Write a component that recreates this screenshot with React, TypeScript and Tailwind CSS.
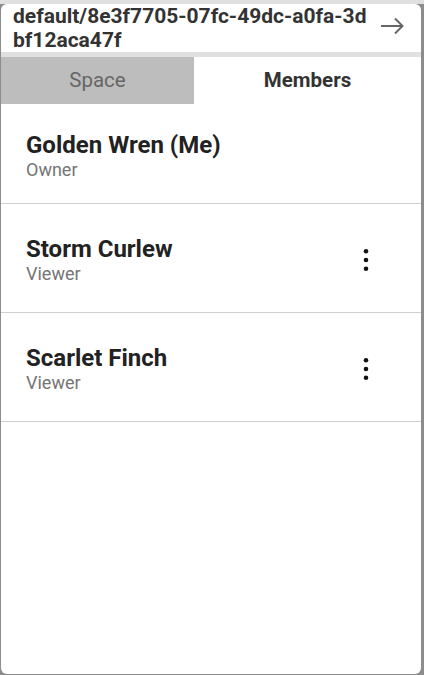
import React from 'react'

const members = [
  { name: 'Golden Wren (Me)', role: 'Owner', me: true },
  { name: 'Storm Curlew', role: 'Viewer', me: false },
  { name: 'Scarlet Finch', role: 'Viewer', me: false },
]

const MoreIcon = () => (
  <svg width="24" height="28" viewBox="0 0 24 28" fill="#111">
    <circle cx="12" cy="5.3" r="2.3" />
    <circle cx="12" cy="14" r="2.3" />
    <circle cx="12" cy="22.7" r="2.3" />
  </svg>
)

const ArrowIcon = () => (
  <svg width="24" height="18" viewBox="0 0 24 18" fill="none" stroke="#666" strokeWidth="2">
    <path d="M1 9h21" />
    <path d="M15 1.5l7.5 7.5-7.5 7.5" />
  </svg>
)

const App = () => {
  return (
    <div className="h-[675px] w-[424px] bg-[#8c8c8c] border-t-[4px] border-[#e0e0e0] pl-[1px] pr-[3px] pb-[1px] font-['Roboto',sans-serif]">
      <div className="h-full bg-white rounded-[6px] flex flex-col overflow-hidden">

        <div className="flex items-center h-[48px] pl-[12px]">
          <div className="w-[356px] break-all text-[21px] leading-[24px] font-bold text-[#333]">
            default/8e3f7705-07fc-49dc-a0fa-3dbf12aca47f
          </div>
          <div className="flex-1 flex pl-[11px] mb-[4px]">
            <ArrowIcon />
          </div>
        </div>

        <div className="h-[5px] bg-[#e0e0e0]" />

        <div className="flex h-[47px] text-[20.5px]">
          <div className="w-[193px] bg-[#bdbdbd] text-[#666] flex items-center justify-center">Space</div>
          <div className="flex-1 font-bold text-[#333] flex items-center justify-center">Members</div>
        </div>

        {members.map((m, i) => (
          <div
            key={m.name}
            className={`flex items-center pl-[25px] pr-[43px] border-b border-[#cfcfcf] ${i === 0 ? 'h-[100px] pt-[5px]' : 'h-[109px] pt-[4px]'}`}
          >
            <div className="flex-1">
              <div className="text-[24px] leading-[24px] font-bold text-[#222]">{m.name}</div>
              <div className="text-[18px] leading-[20px] mt-[3px] text-[#757575]">{m.role}</div>
            </div>
            {!m.me && <MoreIcon />}
          </div>
        ))}

      </div>
    </div>
  )
}

export default App
